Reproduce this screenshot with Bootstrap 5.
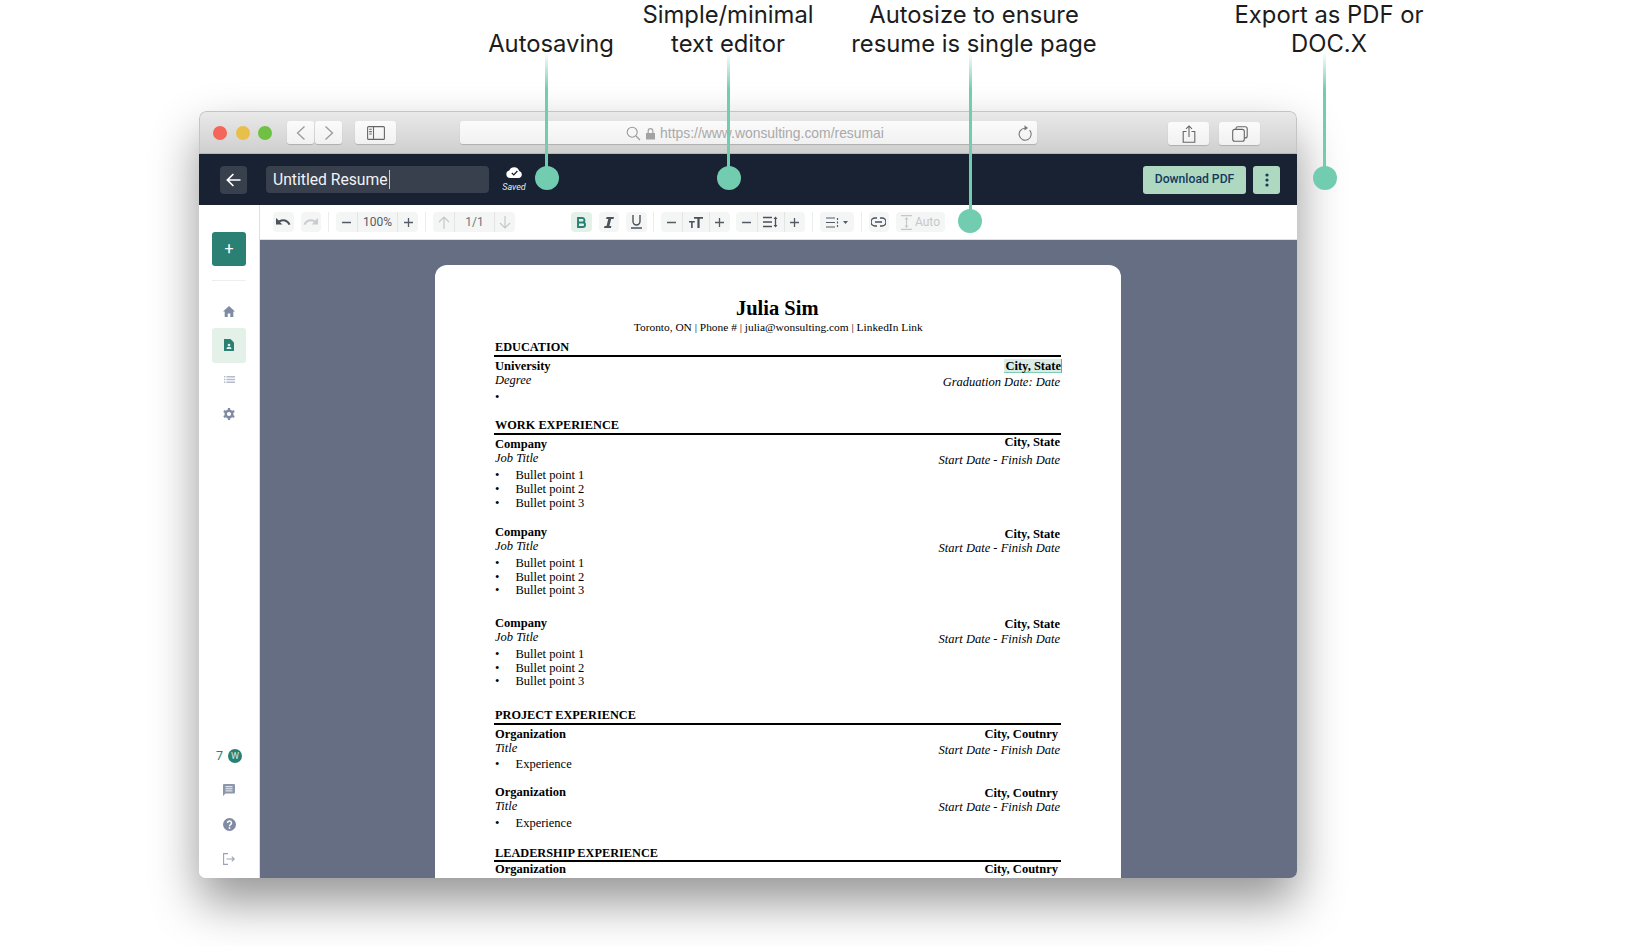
<!DOCTYPE html>
<html lang="en">
<head>
  <meta charset="UTF-8" />
  <meta name="viewport" content="width=device-width, initial-scale=1.0" />
  <title>Resume editor callouts</title>
  <link href="https://cdn.jsdelivr.net/npm/bootstrap@5.3.3/dist/css/bootstrap.min.css" rel="stylesheet">
  <style>
    html, body { height: 100%; }
    body {
      background: #fff;
      overflow: hidden;
      position: relative;
      font-family: "Roboto", sans-serif;
    }

    /* callouts above the window */
    .callout-text {
      position: absolute;
      top: 0;
      z-index: 5;
      transform: translateX(-50%);
      font-family: "Inter", sans-serif;
      font-size: 23.8px;
      line-height: 29px;
      color: #1c1c1c;
      text-align: center;
      white-space: nowrap;
    }
    .callout-line {
      position: absolute;
      top: 52px;
      width: 3px;
      z-index: 5;
      background: linear-gradient(to bottom, rgba(114,204,176,0), #72ccb0 38px);
    }
    .callout-dot {
      position: absolute;
      width: 24px;
      height: 24px;
      border-radius: 50%;
      background: #72ccb0;
      z-index: 6;
    }

    /* browser window */
    .win {
      margin: 111px 0 0 199px;
      width: 1098px;
      height: 767px;
      border-radius: 7px;
      overflow: hidden;
      box-shadow: 0 24px 48px rgba(0,0,0,.42);
      display: flex;
      flex-direction: column;
      background: #fff;
    }
    .win-chrome {
      height: 43px;
      flex: none;
      padding: 9px 0 0 13px;
      background: linear-gradient(#e9e9e9, #cfcfcf);
      border: 1px solid #c4c4c4;
      border-bottom-color: #b5b5b5;
      border-radius: 7px 7px 0 0;
    }
    .tl { width: 14px; height: 14px; border-radius: 50%; margin-right: 8.5px; margin-top: 5px; }
    .tl-r { background: #f4655a; }
    .tl-y { background: #e8bf4a; }
    .tl-g { background: #6fc043; margin-right: 15px; }
    .cbtn {
      height: 23px;
      background: linear-gradient(#fbfbfb, #f1f1f1);
      border-radius: 3px;
      box-shadow: 0 1px 1px rgba(0,0,0,.18);
      display: flex;
      align-items: center;
      justify-content: center;
    }
    .cbtn-nav { width: 27px; margin-right: 1px; }
    .cbtn-side { width: 41px; margin-left: 12px; }
    .url-bar {
      width: 577px;
      margin-left: 64px;
      position: relative;
      font-family: "Liberation Sans", sans-serif;
      font-size: 13.9px;
      color: #a9a9a9;
      gap: 4px;
      padding-left: 13px;
      padding-top: 1px;
    }
    .url-reload { position: absolute; right: 5px; top: 3px; }
    .cbtn-act { width: 41px; margin-top: 1px; }
    .cbtn-share { margin-left: 131px; margin-right: 10px; }

    .app-top {
      height: 51px;
      flex: none;
      background: #182232;
      padding: 0 17px 0 21px;
    }
    .back-btn {
      width: 27px;
      height: 28px;
      background: #383f4d;
      border-radius: 4px;
      margin-right: 19px;
    }
    .title-box {
      width: 223px;
      height: 27px;
      line-height: 28px;
      background: #383f4d;
      border-radius: 4px;
      padding-left: 7px;
      color: #f2f3f4;
      font-size: 15.7px;
    }
    .title-caret { border-right: 1px solid #c9ccd1; padding-right: 1px; }
    .saved-box {
      margin-left: 13px;
      width: 24px;
      color: #e8e9eb;
      font-size: 9px;
      font-style: italic;
      line-height: 11px;
      text-align: center;
    }
    .dl-btn {
      height: 28px;
      background: #aed8c0;
      border-radius: 3px;
      color: #143a5c;
      font-size: 12.2px;
      font-weight: 500;
      width: 103px;
      border: 0;
      padding: 0;
    }
    .more-btn { width: 27px; margin-left: 7px; }

    .app-body { flex: 1; min-height: 0; }
    .app-main { flex: 1; min-width: 0; }

    .tool-bar {
      height: 35px;
      flex: none;
      padding: 0 0 0 13px;
      gap: 7px;
      border-bottom: 1px solid #dcdfe4;
      background: #fff;
    }
    .tb-group, .tb-btn {
      height: 20.5px;
      background: #f4f5f5;
      border-radius: 4px;
      font-size: 12px;
      color: #555b64;
    }
    .tb-btn { width: 20.5px; }
    .tb-cell { height: 100%; border-left: 1px solid #e2e4e6; }
    .tb-cell:first-child { border-left: 0; }
    .tb-sep { width: 1px; height: 20px; background: #eceded; }
    .tb-tight { margin-left: -1px; }
    .tb-on { background: #e3f1e9; }
    .tb-off { color: #b9bcc2; }
    .tb-far { margin-left: 49px; }
    .w21 { width: 21px; }
    .w27 { width: 27px; }
    .w40 { width: 40px; }
    .tb-auto { width: 49px; gap: 3px; color: #c5c7cb; }
    .tb-align { width: 34px; gap: 4px; }

    .side-rail {
      width: 61px;
      flex: none;
      background: #fff;
      border-right: 1px solid #dcdfe6;
      padding: 27px 13px 0 13px;
      color: #7f8ba3;
    }
    .rail-add {
      height: 34px;
      width: 34px;
      background: #2a8072;
      border-radius: 3px;
      color: #fff;
      font-size: 16px;
    }
    .rail-rule { height: 1px; background: #eceef0; margin: 14px 0 13px; width: 34px; }
    .rail-item { width: 34px; height: 34.3px; border-radius: 3px; }
    .rail-on { background: #e3f1e9; }
    .rail-foot { padding-bottom: 2px; }
    .rail-seven { color: #2a8072; font-size: 12.5px; gap: 5px; }
    .rail-w {
      width: 14px;
      height: 14px;
      border-radius: 50%;
      background: #2a8072;
      color: #d8ece4;
      font-size: 9px;
      line-height: 14px;
      text-align: center;
    }

    .doc-area {
      flex: 1;
      min-height: 0;
      background: #666e84;
      padding: 25px 0 0 175px;
      overflow: hidden;
    }
    .paper {
      width: 686px;
      height: 640px;
      background: #fff;
      border-radius: 12px 12px 0 0;
      padding: 32px 60px 0 58.5px;
      font-family: "Liberation Serif", serif;
      font-size: 12.5px;
      color: #000;
      overflow: hidden;
    }
    .rz-name { font-size: 20.5px; font-weight: 700; line-height: 23px; text-align: center; }
    .rz-contact { height: 14px; line-height: 14px; text-align: center; font-size: 11.4px; padding-left: 2px; }
    .rz-head {
      height: 16.5px;
      line-height: 14px;
      font-size: 12.3px;
      border-bottom: 2px solid #000;
      padding-left: 1.5px;
      font-weight: 700;
      margin-bottom: 2px;
    }
    .rz-head-lo { margin-bottom: 2.7px; }
    .rz-head-tight { margin-bottom: 0; }
    .rz-line {
      height: 14px;
      line-height: 14px;
      padding: 0 1px 0 1.5px;
      display: flex;
      justify-content: space-between;
      align-items: flex-start;
    }
    .rz-line b { font-weight: 700; }
    .rz-up2 { margin-top: -2px; }
    .rz-dn1 { margin-top: 1px; }
    .rz-dn2 { margin-top: 2px; }
    .rz-pad3 { margin-right: 2px; }
    .rz-list { list-style: none; margin: 4px 0 0; padding: 0 0 0 1.5px; }
    .rz-list-hi { margin-top: 3px; }
    .rz-list li { height: 13.8px; line-height: 13.8px; }
    .rz-list li::before { content: "\2022"; display: inline-block; width: 20.5px; }
    .rz-gap6 { margin-top: 6px; }
    .rz-gap13 { margin-top: 13px; }
    .rz-gap14 { margin-top: 14px; }
    .rz-gap15 { margin-top: 15px; }
    .rz-gap175 { margin-top: 17.5px; }
    .rz-gap19 { margin-top: 19px; }
    .rz-sel {
      background: #d9ece5;
      border-bottom: 1px solid #7fcdb2;
      border-right: 1px solid #8a9a95;
      height: 14.5px;
      padding-left: 1px;
      margin-right: -2px;
    }
  </style>
</head>
<body>
  <!-- callouts -->
  <div class="callout-text" style="left:551px;top:29px">Autosaving</div>
  <div class="callout-text" style="left:728px">Simple/minimal<br>text editor</div>
  <div class="callout-text" style="left:974px">Autosize to ensure<br>resume is single page</div>
  <div class="callout-text" style="left:1329px">Export as PDF or<br>DOC.X</div>
  <div class="callout-line" style="left:545px;height:126px"></div>
  <div class="callout-line" style="left:727px;height:126px"></div>
  <div class="callout-line" style="left:969px;height:168px"></div>
  <div class="callout-line" style="left:1323px;height:126px"></div>
  <div class="callout-dot" style="left:535px;top:166px"></div>
  <div class="callout-dot" style="left:717px;top:166px"></div>
  <div class="callout-dot" style="left:958px;top:209px"></div>
  <div class="callout-dot" style="left:1313px;top:166px"></div>

  <div class="win">
    <!-- safari chrome -->
    <div class="win-chrome d-flex align-items-start">
      <div class="tl tl-r"></div><div class="tl tl-y"></div><div class="tl tl-g"></div>
      <div class="cbtn cbtn-nav">
        <svg width="12" height="16" viewBox="0 0 12 16" fill="none" stroke="#9a9a9a" stroke-width="1.3"><path d="M9.5 1.5 2.5 8l7 6.5"/></svg>
      </div>
      <div class="cbtn cbtn-nav">
        <svg width="12" height="16" viewBox="0 0 12 16" fill="none" stroke="#9a9a9a" stroke-width="1.3"><path d="M2.5 1.5 9.5 8l-7 6.5"/></svg>
      </div>
      <div class="cbtn cbtn-side">
        <svg width="18" height="14" viewBox="0 0 18 14" fill="none" stroke="#666" stroke-width="1.1"><rect x=".6" y=".6" width="16.8" height="12.8" rx="1"/><path d="M6.5 .6v12.8M2.2 3.2h2.6M2.2 5.6h2.6M2.2 8h2.6"/></svg>
      </div>
      <div class="cbtn url-bar">
        <svg width="15" height="15" viewBox="0 0 15 15" fill="none" stroke="#999" stroke-width="1.1"><circle cx="6.2" cy="6.2" r="5"/><path d="m10 10 4 4"/></svg>
        <svg width="11" height="13" viewBox="0 0 11 13" fill="#a3a3a3"><path d="M1 6h9v6.500H1zM2.600 6V4a2.900 2.900 0 0 1 5.800 0v2H7.200V4a1.700 1.700 0 0 0-3.400 0v2z"/></svg>
        <span>https://www.wonsulting.com/resumai</span>
        <svg class="url-reload" width="15" height="17" viewBox="0 0 15 17" fill="none" stroke="#777" stroke-width="1.1"><path d="M12.600 6.200A6 6 0 1 1 8 4.200"/><path d="M7.500 1.200 11 4 7.500 6.600z" fill="#777" stroke="none"/></svg>
      </div>
      <div class="cbtn cbtn-act cbtn-share">
        <svg width="14" height="18" viewBox="0 0 14 18" fill="none" stroke="#666" stroke-width="1.1"><path d="M4.500 6.500H1.200v10.800h11.600V6.500H9.500M7 12V1M4 3.800 7 .9l3 2.900"/></svg>
      </div>
      <div class="cbtn cbtn-act">
        <svg width="16" height="16" viewBox="0 0 16 16" fill="none" stroke="#666" stroke-width="1.1"><rect x=".7" y="3.400" width="11.600" height="11.900" rx="2"/><path d="M4 3.200V2.600A1.900 1.900 0 0 1 5.900.7h7.300a2 2 0 0 1 2 2v7.200a2 2 0 0 1-2 2h-.8"/></svg>
      </div>
    </div>

    <!-- app header -->
    <div class="app-top d-flex align-items-center">
      <div class="back-btn d-flex align-items-center justify-content-center">
        <svg width="15" height="14" viewBox="0 0 15 14" fill="none" stroke="#fff" stroke-width="1.7"><path d="M14.500 7H1.600M7.400 1 1.400 7l6 6"/></svg>
      </div>
      <div class="title-box"><span class="title-caret">Untitled Resume</span></div>
      <div class="saved-box">
        <svg class="d-block mx-auto" width="17" height="12" viewBox="0 0 17 12"><path fill="#fff" d="M4 12a3.800 3.800 0 0 1-.7-7.500A5.300 5.300 0 0 1 13.200 5 3.600 3.600 0 0 1 13 12z"/><path fill="none" stroke="#182232" stroke-width="1.3" d="m5.800 7 2 1.900L11.400 5"/></svg>
        <div class="mt-1">Saved</div>
      </div>
      <button class="dl-btn ms-auto">Download PDF</button>
      <div class="dl-btn more-btn d-flex align-items-center justify-content-center">
        <svg width="4" height="14" viewBox="0 0 4 14" fill="#143a5c"><circle cx="2" cy="2" r="1.600"/><circle cx="2" cy="7" r="1.600"/><circle cx="2" cy="12" r="1.600"/></svg>
      </div>
    </div>

    <div class="app-body d-flex">
      <!-- side rail -->
      <div class="side-rail d-flex flex-column">
        <div class="rail-add d-flex align-items-center justify-content-center">+</div>
        <div class="rail-rule"></div>
        <div class="rail-item d-flex align-items-center justify-content-center">
          <svg width="12" height="11" viewBox="0 0 12 11" fill="#7f8ba3"><path d="M6 0 0 5.500h1.700V11h3V7.500h2.600V11h3V5.500H12z"/></svg>
        </div>
        <div class="rail-item rail-on d-flex align-items-center justify-content-center">
          <svg width="10" height="12" viewBox="0 0 10 12"><path fill="#2a8072" d="M0 0h6.500L10 3.500V12H0z"/><circle cx="5" cy="6" r="1.300" fill="#e3f1e9"/><path fill="#e3f1e9" d="M2.500 10c0-3 5-3 5 0z"/></svg>
        </div>
        <div class="rail-item d-flex align-items-center justify-content-center">
          <svg width="11" height="7" viewBox="0 0 11 7" fill="#b4bccb"><path d="M0 0h1.400v1.400H0zM2.400 0H11v1.400H2.400zM0 2.800h1.400v1.400H0zM2.400 2.800H11v1.400H2.400zM0 5.600h1.400V7H0zM2.400 5.600H11V7H2.400z"/></svg>
        </div>
        <div class="rail-item d-flex align-items-center justify-content-center">
          <svg width="12" height="12" viewBox="0 0 12 12" fill="none" stroke="#7f8ba3"><circle cx="6" cy="6" r="3.300" stroke-width="2.400"/><path stroke-width="2.200" d="M6 0v2.500M6 9.500V12M.8 3 3 4.250M9 7.750 11.200 9M.8 9 3 7.750M9 4.250 11.200 3"/></svg>
        </div>
        <div class="rail-foot mt-auto">
          <div class="rail-item rail-seven d-flex align-items-center justify-content-center">
            <span>7</span><span class="rail-w">W</span>
          </div>
          <div class="rail-item d-flex align-items-center justify-content-center">
            <svg width="12" height="12" viewBox="0 0 12 12"><path fill="#8c97ad" d="M1 0h10a1 1 0 0 1 1 1v7.500a1 1 0 0 1-1 1H2.500L0 12V1a1 1 0 0 1 1-1z"/><path stroke="#fff" stroke-width=".9" d="M2.500 2.700h7M2.500 4.800h7M2.500 6.900h7"/></svg>
          </div>
          <div class="rail-item d-flex align-items-center justify-content-center">
            <svg width="13" height="13" viewBox="0 0 13 13"><circle cx="6.500" cy="6.500" r="6.500" fill="#7f8ba3"/><path fill="none" stroke="#fff" stroke-width="1.500" d="M4.500 5a2 2 0 1 1 3 1.700c-.7.400-1 .8-1 1.500"/><circle cx="6.500" cy="10" r=".9" fill="#fff"/></svg>
          </div>
          <div class="rail-item d-flex align-items-center justify-content-center">
            <svg width="12" height="12" viewBox="0 0 12 12" fill="none" stroke="#98a2b6" stroke-width="1.100"><path d="M5 .6H.6v10.800H5M3.500 6H11M8.800 3.600 11.300 6 8.800 8.400"/></svg>
          </div>
        </div>
      </div>

      <div class="app-main d-flex flex-column">
        <!-- toolbar -->
        <div class="tool-bar d-flex align-items-center">
          <div class="tb-btn d-flex align-items-center justify-content-center">
            <svg width="15" height="9" viewBox="0 0 15 9" fill="#4b525c"><path d="M0 0v6.600h6.400L4 4.300c2.900-2 6.500-1.200 8.600 2.700l1.900-.8C12 1 7 0 2.900 2.500z"/></svg>
          </div>
          <div class="tb-btn d-flex align-items-center justify-content-center">
            <svg width="15" height="9" viewBox="0 0 15 9" fill="#c9cbcf"><path d="M15 0v6.600H8.600L11 4.300C8.100 2.300 4.500 3.100 2.400 7L.5 6.200C3 1 8 0 12.100 2.500z"/></svg>
          </div>
          <div class="tb-sep"></div>
          <div class="tb-group d-flex">
            <div class="tb-cell w21 d-flex align-items-center justify-content-center"><svg width="11" height="11" viewBox="0 0 11 11" stroke="#555b64" stroke-width="1.3"><path d="M1 5.500h9"/></svg></div>
            <div class="tb-cell w40 d-flex align-items-center justify-content-center">100%</div>
            <div class="tb-cell w21 d-flex align-items-center justify-content-center"><svg width="11" height="11" viewBox="0 0 11 11" stroke="#555b64" stroke-width="1.3"><path d="M1 5.500h9M5.500 1v9"/></svg></div>
          </div>
          <div class="tb-sep"></div>
          <div class="tb-group tb-off d-flex">
            <div class="tb-cell w21 d-flex align-items-center justify-content-center"><svg width="12" height="13" viewBox="0 0 12 13" fill="none" stroke="#c3c6ca" stroke-width="1.2"><path d="M6 13V1M1 6l5-5 5 5"/></svg></div>
            <div class="tb-cell w40 d-flex align-items-center justify-content-center text-secondary">1/1</div>
            <div class="tb-cell w21 d-flex align-items-center justify-content-center"><svg width="12" height="13" viewBox="0 0 12 13" fill="none" stroke="#c3c6ca" stroke-width="1.2"><path d="M6 0v12M1 7l5 5 5-5"/></svg></div>
          </div>
          <div class="tb-btn tb-on tb-far d-flex align-items-center justify-content-center">
            <svg width="9" height="11" viewBox="0 0 9 11" fill="none" stroke="#2a8072" stroke-width="1.9"><path d="M1 1h4.200a2.100 2.100 0 0 1 0 4.500H1zm0 4.500h4.800a2.200 2.200 0 0 1 0 4.500H1z"/></svg>
          </div>
          <div class="tb-btn d-flex align-items-center justify-content-center">
            <svg width="10" height="11" viewBox="0 0 10 11" fill="#4b525c"><path d="M2.600 0H10l-.5 2H7.200L5.400 9h2l-.5 2H0l.5-2h2L4.300 2H2.100z"/></svg>
          </div>
          <div class="tb-btn d-flex align-items-center justify-content-center">
            <svg width="11" height="14" viewBox="0 0 11 14" fill="none" stroke="#4b525c" stroke-width="1.4"><path d="M2 0v6.500a3.500 3.500 0 0 0 7 0V0M0 13h11"/></svg>
          </div>
          <div class="tb-sep tb-tight"></div>
          <div class="tb-group d-flex">
            <div class="tb-cell w21 d-flex align-items-center justify-content-center"><svg width="11" height="11" viewBox="0 0 11 11" stroke="#555b64" stroke-width="1.3"><path d="M1 5.500h9"/></svg></div>
            <div class="tb-cell w27 d-flex align-items-center justify-content-center"><svg width="14" height="11" viewBox="0 0 14 11" fill="#4b525c"><path d="M5 0h9v1.800h-3.400V11H8.400V1.800H5zM0 4h5.800v1.400H3.700V11H2.100V5.400H0z"/></svg></div>
            <div class="tb-cell w21 d-flex align-items-center justify-content-center"><svg width="11" height="11" viewBox="0 0 11 11" stroke="#555b64" stroke-width="1.3"><path d="M1 5.500h9M5.500 1v9"/></svg></div>
          </div>
          <div class="tb-group tb-tight d-flex">
            <div class="tb-cell w21 d-flex align-items-center justify-content-center"><svg width="11" height="11" viewBox="0 0 11 11" stroke="#555b64" stroke-width="1.3"><path d="M1 5.500h9"/></svg></div>
            <div class="tb-cell w27 d-flex align-items-center justify-content-center"><svg width="15" height="12" viewBox="0 0 15 12" fill="none" stroke="#4b525c" stroke-width="1.3"><path d="M0 1.500h9M0 6h9M0 10.500h9"/><path d="M12.500 1.500v9"/><path d="m10.500 3 2-2.500 2 2.500zm0 6 2 2.500 2-2.500z" fill="#4b525c" stroke="none"/></svg></div>
            <div class="tb-cell w21 d-flex align-items-center justify-content-center"><svg width="11" height="11" viewBox="0 0 11 11" stroke="#555b64" stroke-width="1.3"><path d="M1 5.500h9M5.500 1v9"/></svg></div>
          </div>
          <div class="tb-sep"></div>
          <div class="tb-group tb-align d-flex align-items-center justify-content-center">
            <svg width="13" height="11" viewBox="0 0 13 11" fill="none" stroke="#555b64" stroke-width="1.2"><path d="M0 1h9M0 5.500h9M0 10h9"/><path d="M11.500 1v2M11.500 4.500v2M11.500 8v2"/></svg>
            <svg width="5" height="3" viewBox="0 0 5 3" fill="#555b64"><path d="M0 0h5L2.500 3z"/></svg>
          </div>
          <div class="tb-sep"></div>
          <div class="tb-btn d-flex align-items-center justify-content-center">
            <svg width="15" height="10" viewBox="0 0 15 10" fill="none" stroke="#4b525c" stroke-width="1.5"><path d="M6 1H4a4 4 0 0 0 0 8h2M9 1h2a4 4 0 0 1 0 8H9M4 5h7"/></svg>
          </div>
          <div class="tb-group tb-auto d-flex align-items-center justify-content-center">
            <svg width="11" height="15" viewBox="0 0 11 15" fill="none" stroke="#c5c7cb" stroke-width="1.1"><path d="M0 .6h11M0 14.400h11M5.500 3v9"/><path d="m3.500 4.500 2-2.500 2 2.500zm0 6 2 2.500 2-2.500z" fill="#c5c7cb" stroke="none"/></svg>
            <span>Auto</span>
          </div>
        </div>

        <!-- resume page -->
        <div class="doc-area">
          <div class="paper">
            <div class="rz-name">Julia Sim</div>
            <div class="rz-contact">Toronto, ON | Phone # | julia@wonsulting.com | LinkedIn Link</div>

            <div class="rz-head rz-gap6">EDUCATION</div>
            <div class="rz-line"><b>University</b><b class="rz-sel">City, State</b></div>
            <div class="rz-line"><i>Degree</i><i class="rz-dn2">Graduation Date: Date</i></div>
            <ul class="rz-list"><li></li></ul>

            <div class="rz-head rz-head-lo rz-gap14">WORK EXPERIENCE</div>
            <div class="rz-line"><b>Company</b><b class="rz-up2">City, State</b></div>
            <div class="rz-line"><i>Job Title</i><i class="rz-dn2">Start Date - Finish Date</i></div>
            <ul class="rz-list"><li>Bullet point 1</li><li>Bullet point 2</li><li>Bullet point 3</li></ul>

            <div class="rz-line rz-gap14"><b>Company</b><b class="rz-dn2">City, State</b></div>
            <div class="rz-line"><i>Job Title</i><i class="rz-dn2">Start Date - Finish Date</i></div>
            <ul class="rz-list"><li>Bullet point 1</li><li>Bullet point 2</li><li>Bullet point 3</li></ul>

            <div class="rz-line rz-gap175"><b>Company</b><b class="rz-dn1">City, State</b></div>
            <div class="rz-line"><i>Job Title</i><i class="rz-dn2">Start Date - Finish Date</i></div>
            <ul class="rz-list"><li>Bullet point 1</li><li>Bullet point 2</li><li>Bullet point 3</li></ul>

            <div class="rz-head rz-head-lo rz-gap19">PROJECT EXPERIENCE</div>
            <div class="rz-line"><b>Organization</b><b class="rz-pad3">City, Coutnry</b></div>
            <div class="rz-line"><i>Title</i><i class="rz-dn2">Start Date - Finish Date</i></div>
            <ul class="rz-list rz-list-hi"><li>Experience</li></ul>

            <div class="rz-line rz-gap13"><b>Organization</b><b class="rz-pad3 rz-dn1">City, Coutnry</b></div>
            <div class="rz-line"><i>Title</i><i class="rz-dn1">Start Date - Finish Date</i></div>
            <ul class="rz-list"><li>Experience</li></ul>

            <div class="rz-head rz-head-tight rz-gap15">LEADERSHIP EXPERIENCE</div>
            <div class="rz-line"><b>Organization</b><b class="rz-pad3">City, Coutnry</b></div>
          </div>
        </div>
      </div>
    </div>
  </div>

  <script src="https://cdn.jsdelivr.net/npm/bootstrap@5.3.3/dist/js/bootstrap.bundle.min.js"></script>
</body>
</html>
